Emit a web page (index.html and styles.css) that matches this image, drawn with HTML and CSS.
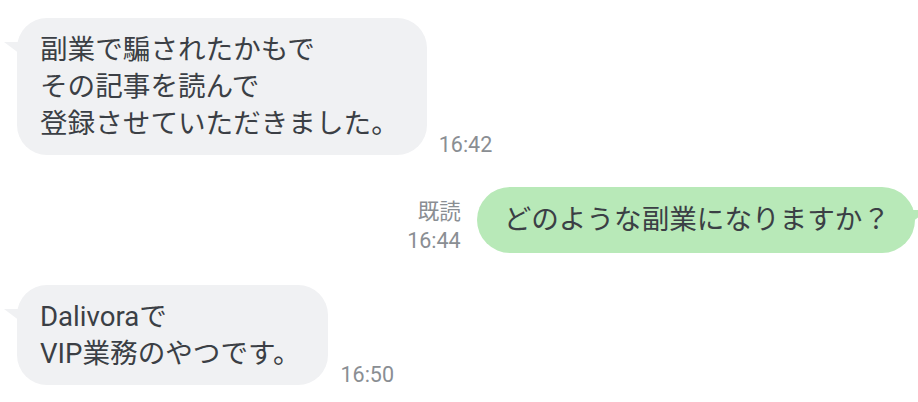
FILE: index.html
```html
<!DOCTYPE html>
<html lang="ja">
<head>
    <meta charset="UTF-8">
    <meta name="viewport" content="width=device-width, initial-scale=1.0">
    <title>トーク</title>
    <link rel="stylesheet" href="styles.css">
</head>
<body>
    <div class="chat">
        <div class="row">
            <div class="bubble received">
                <span class="tail"></span>
                副業で騙されたかもで<br>
                その記事を読んで<br>
                登録させていただきました。
            </div>
            <div class="meta">16:42</div>
        </div>

        <div class="row mine">
            <div class="meta">
                <div>既読</div>
                <div>16:44</div>
            </div>
            <div class="bubble sent">
                <span class="tail"></span>
                どのような副業になりますか？
            </div>
        </div>

        <div class="row">
            <div class="bubble received">
                <span class="tail"></span>
                Dalivoraで<br>
                VIP業務のやつです。
            </div>
            <div class="meta">16:50</div>
        </div>
    </div>
</body>
</html>
```

FILE: styles.css
```css
* {
    margin: 0;
    padding: 0;
    box-sizing: border-box;
}

body {
    font-family: Roboto, 'Noto Sans CJK JP', sans-serif;
    background: #ffffff;
    color: #3b3f45;
    overflow: hidden;
}

.chat {
    display: flex;
    flex-direction: column;
    gap: 32px;
    padding: 18px 3px 0 17px;
}

.row {
    display: flex;
    align-items: flex-end;
    gap: 12px;
}

.row.mine {
    justify-content: flex-end;
    gap: 16px;
}

.bubble {
    position: relative;
    font-size: 27.6px;
    line-height: 37px;
    padding: 13px 28px 13px 23px;
    border-radius: 30px;
}

.bubble.received {
    background: #f0f1f3;
}

.bubble.sent {
    background: #b8e9b8;
    padding: 14px 25px 15px 27px;
    border-radius: 33px;
}

.tail {
    position: absolute;
    top: 24px;
    width: 20px;
    height: 15px;
}

.received .tail {
    left: -13px;
    background: #f0f1f3;
    clip-path: polygon(0 0, 100% 0, 100% 100%);
}

.sent .tail {
    right: -13px;
    top: 23px;
    background: #b8e9b8;
    clip-path: polygon(0 0, 100% 0, 0 100%);
}

.meta {
    font-size: 21.5px;
    line-height: 29px;
    color: #8a8e93;
    text-align: right;
    margin-bottom: -4px;
}

.mine .meta {
    margin-bottom: -2px;
}
```
